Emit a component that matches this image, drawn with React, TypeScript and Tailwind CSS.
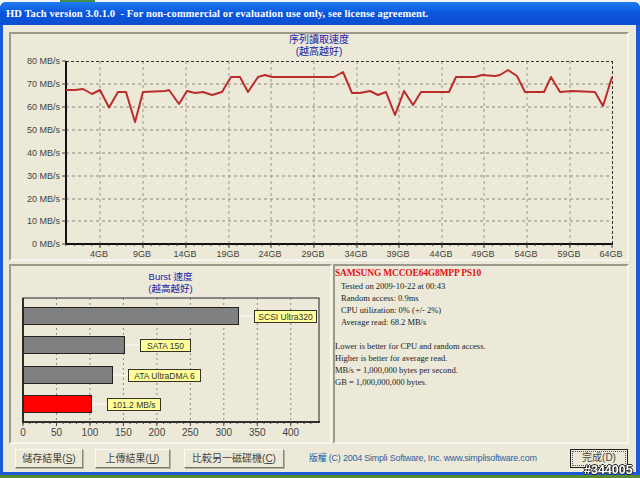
import React from "react";

const sans = "font-['Liberation_Sans','Noto_Sans_CJK_TC',sans-serif]";

const linePoints =
  "66,90 75,90 83,89 92,94 100,90 109,107.5 118,92 126,92 135,122 143,92 165,91 169,90 179,104 187,91 195,93 203,92 212,95 222,92 231,77 240,77 248,92 258,77 265,75 272,77 285,77 334,77 343,72 352,93 360,93 370,91 378,95 386,92 395,115 404,91 413,105 421,92 444,92 449,92 456,77 475,77 482,75 495,76 500,75 508,70 517,76 525,92 544,92 551,77 560,92 572,91 595,92 603,106 612,77";

const yRows = [
  { y: 61, label: "80 MB/s" },
  { y: 84, label: "70 MB/s" },
  { y: 107, label: "60 MB/s" },
  { y: 130, label: "50 MB/s" },
  { y: 153, label: "40 MB/s" },
  { y: 176, label: "30 MB/s" },
  { y: 199, label: "20 MB/s" },
  { y: 221, label: "10 MB/s" },
  { y: 244, label: "0 MB/s" },
];

const xCols = [
  { x: 100, label: "4GB" },
  { x: 143, label: "9GB" },
  { x: 186, label: "14GB" },
  { x: 229, label: "19GB" },
  { x: 271, label: "24GB" },
  { x: 314, label: "29GB" },
  { x: 357, label: "34GB" },
  { x: 399, label: "39GB" },
  { x: 442, label: "44GB" },
  { x: 484, label: "49GB" },
  { x: 527, label: "54GB" },
  { x: 570, label: "59GB" },
  { x: 612, label: "64GB" },
];

const minorTicks = Array.from({ length: 64 }, (_, i) => 66 + i * 8.53);
const burstMinor = Array.from({ length: 44 }, (_, i) => 23 + i * 6.694);

const burstBars = [
  { y: 307, end: 238, fill: "#808080", label: "SCSI Ultra320", lx: 254, lw: 62 },
  { y: 336, end: 124, fill: "#808080", label: "SATA 150", lx: 140, lw: 50 },
  { y: 366, end: 112, fill: "#808080", label: "ATA UltraDMA 6", lx: 128, lw: 72 },
  { y: 395, end: 91, fill: "#ff0000", label: "101.2 MB/s", lx: 107, lw: 53 },
];

const burstTicks = [0, 50, 100, 150, 200, 250, 300, 350, 400];

const ReadChart = () => (
  <svg viewBox="11 54 616 205" className={`w-[616px] h-[205px] ${sans}`}>
    {yRows.slice(1, 8).map((r) => (
      <line key={r.y} x1="66" x2="612" y1={r.y} y2={r.y} stroke="#8a887e" strokeDasharray="3 3" />
    ))}
    {xCols.slice(0, 12).map((c) => (
      <line key={c.x} x1={c.x} x2={c.x} y1="61" y2="244" stroke="#9a988c" strokeDasharray="3 3" />
    ))}
    <line x1="66" x2="612" y1="61.5" y2="61.5" stroke="#333" strokeDasharray="3 2" />
    <line x1="612.5" x2="612.5" y1="61" y2="244" stroke="#333" strokeDasharray="3 2" />
    <line x1="66" x2="66" y1="61" y2="245" stroke="#111" strokeWidth="2" />
    <line x1="66" x2="613" y1="244" y2="244" stroke="#111" strokeWidth="2" />
    {minorTicks.map((x) => (
      <line key={x} x1={x} x2={x} y1="244" y2="246" stroke="#444" />
    ))}
    {yRows.map((r) => (
      <g key={r.label}>
        <line x1="62" x2="66" y1={r.y} y2={r.y} stroke="#444" />
        <text x="60" y={r.y + 3} textAnchor="end" fontSize="9" fill="#44443e">
          {r.label}
        </text>
      </g>
    ))}
    {xCols.map((c) => (
      <g key={c.label}>
        <line x1={c.x} x2={c.x} y1="244" y2="248" stroke="#444" />
        <text x={c.x - 1} y="257" textAnchor="middle" fontSize="9" fill="#44443e">
          {c.label}
        </text>
      </g>
    ))}
    <polyline points={linePoints} fill="none" stroke="#bb2c2c" strokeWidth="2" strokeLinejoin="round" />
  </svg>
);

const BurstChart = () => (
  <svg viewBox="11 295 319 146" className={`w-[319px] h-[146px] ${sans}`}>
    {burstTicks.slice(1).map((t) => {
      const x = 23 + t * 0.6694;
      return <line key={t} x1={x} x2={x} y1="298" y2="422" stroke="#8a887e" strokeDasharray="2 3" />;
    })}
    <rect x="23" y="298" width="296" height="124" fill="none" stroke="#222" />
    <line x1="23" x2="23" y1="298" y2="423" stroke="#111" strokeWidth="1.5" />
    <line x1="23" x2="320" y1="422" y2="422" stroke="#111" strokeWidth="1.5" />
    {burstMinor.map((x) => (
      <line key={x} x1={x} x2={x} y1="422" y2="424" stroke="#444" />
    ))}
    {burstTicks.map((t) => {
      const x = 23 + t * 0.6694;
      return (
        <g key={t}>
          <line x1={x} x2={x} y1="422" y2="426" stroke="#444" />
          <text x={x} y="436" textAnchor="middle" fontSize="10" fill="#44443e">
            {t}
          </text>
        </g>
      );
    })}
    {burstBars.map((b) => (
      <g key={b.label}>
        <line x1={b.end} x2={b.lx} y1={b.y + 9} y2={b.y + 9} stroke="#fbfbf4" />
        <rect x="23.5" y={b.y + 0.5} width={b.end - 23} height="17" fill={b.fill} stroke="#222" />
        <rect x={b.lx + 0.5} y={b.y + 3.5} width={b.lw} height="12" fill="#ffff99" stroke="#33332a" />
        <text x={b.lx + b.lw / 2 + 0.5} y={b.y + 13} textAnchor="middle" fontSize="8.5" fill="#33332e">
          {b.label}
        </text>
      </g>
    ))}
  </svg>
);

const Button = ({ width, text, hot }: { width: string; text: string; hot: string }) => (
  <button
    className={`${width} h-[19px] bg-[#ece9d8] border border-t-[#fbfaf4] border-l-[#fbfaf4] border-r-[#8a887c] border-b-[#77756a] shadow-[1px_1px_0_#b5b2a3] text-[10px] leading-none whitespace-nowrap text-[#44443e] ${sans}`}
  >
    {text}(<span className="underline">{hot}</span>)
  </button>
);

const infoTop = [
  "Tested on 2009-10-22 at 00:43",
  "Random access: 0.9ms",
  "CPU utilization: 0% (+/- 2%)",
  "Average read: 68.2 MB/s",
];

const infoBottom = [
  "Lower is better for CPU and random access.",
  "Higher is better for average read.",
  "MB/s = 1,000,000 bytes per second.",
  "GB = 1,000,000,000 bytes.",
];

const panel = "border-2 border-t-[#9c9a8e] border-l-[#9c9a8e] border-r-[#f7f6ee] border-b-[#f7f6ee] bg-[#ece9d8]";

export default function App() {
  return (
    <div className="w-[640px] h-[478px] flex flex-col overflow-hidden bg-[#f4f6f4]">
      <div className="h-[2px] flex shrink-0">
        <div className="w-[60px]" />
        <div className="w-[35px] bg-[#3f8f4a]" />
      </div>
      <div className="h-[473px] shrink-0 flex flex-col rounded-t-[6px] overflow-hidden bg-[#1c5ad8] pl-[3px] pr-[4px] pb-[3px]">
        <div className="h-[23px] shrink-0 -ml-[3px] -mr-[4px] px-[6px] flex items-center bg-gradient-to-b from-[#1f7cf0] via-[#0a55dc] to-[#0c4fd0]">
          <span className="font-['Liberation_Serif',serif] font-bold text-[10.5px] tracking-[0.1px] text-white whitespace-pre">
            HD Tach version 3.0.1.0  - For non-commercial or evaluation use only, see license agreement.
          </span>
        </div>
        <div className="flex-1 flex flex-col bg-[#ece9d8] pl-[6px] pr-[7px] pt-[7px] min-h-0">
          <div className={`${panel} h-[229px] flex flex-col items-center`}>
            <div className={`h-[20px] text-[10px] leading-[12px] text-center text-[#2222aa] ${sans}`}>
              <div>序列讀取速度</div>
              <div>(越高越好)</div>
            </div>
            <ReadChart />
          </div>
          <div className="flex gap-[1px] mt-[3px]">
            <div className={`${panel} w-[323px] h-[180px] flex flex-col items-center pt-[5px]`}>
              <div className={`h-[24px] text-[9.5px] leading-[12px] text-center text-[#2222aa] ${sans}`}>
                <div>Burst 速度</div>
                <div>(越高越好)</div>
              </div>
              <BurstChart />
            </div>
            <div className={`${panel} flex-1 h-[180px] pt-[1px] font-['Liberation_Serif',serif] text-[8.5px] leading-[12px] text-[#22221e]`}>
              <div className="font-bold text-[9.5px] text-[#e01414] tracking-[-0.2px] h-[13px]">SAMSUNG MCCOE64G8MPP PS10</div>
              <div className="pl-[6px]">
                {infoTop.map((t) => (
                  <div key={t}>{t}</div>
                ))}
              </div>
              <div className="mt-[12px]">
                {infoBottom.map((t) => (
                  <div key={t}>{t}</div>
                ))}
              </div>
            </div>
          </div>
          <div className="flex items-center mt-[5px] pl-[6px]">
            <Button width="w-[68px]" text="儲存結果" hot="S" />
            <div className="w-[12px]" />
            <Button width="w-[75px]" text="上傳結果" hot="U" />
            <div className="w-[14px]" />
            <Button width="w-[100px]" text="比較另一磁碟機" hot="C" />
            <span className={`ml-[25px] w-[261px] text-[9px] tracking-[-0.23px] leading-none text-[#2c5f9e] whitespace-nowrap ${sans}`}>
              版權 (C) 2004 Simpli Software, Inc. www.simplisoftware.com
            </span>
            <button className={`w-[58px] h-[19px] border border-[#222] p-[1px] text-[10px] leading-none text-[#44443e] ${sans}`}>
              <span className="flex h-full items-center justify-center border border-dotted border-[#555] pb-[2px]">完成(D)</span>
            </button>
          </div>
        </div>
      </div>
      <div className="h-[3px] shrink-0 bg-[#5a8a34]" />
      <div className="fixed left-[584px] top-[464px] font-['Liberation_Sans',sans-serif] font-bold text-[12.5px] leading-[12px] text-white [text-shadow:1px_0_0_#222,-1px_0_0_#222,0_1px_0_#222,0_-1px_0_#222]">
        #344005
      </div>
    </div>
  );
}
